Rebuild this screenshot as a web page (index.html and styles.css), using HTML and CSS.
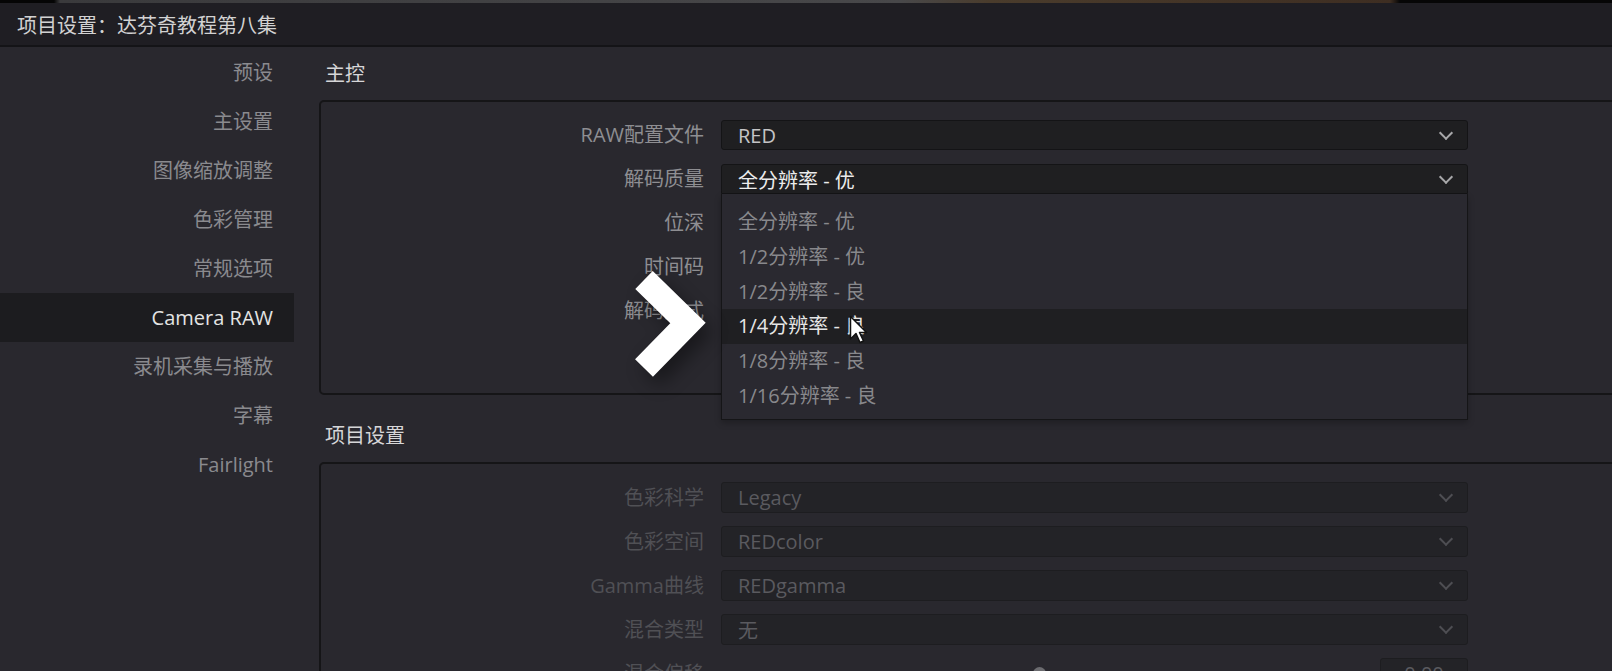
FILE: index.html
```html
<!DOCTYPE html>
<html lang="zh-CN">

<head>
    <meta charset="UTF-8">
    <title>项目设置</title>
    <link rel="stylesheet" href="styles.css">
</head>

<body>
    <div class="top-strip"></div>
    <header class="title-bar">项目设置：达芬奇教程第八集</header>

    <div class="window">
        <nav class="sidebar">
            <div class="nav-item">预设</div>
            <div class="nav-item">主设置</div>
            <div class="nav-item">图像缩放调整</div>
            <div class="nav-item">色彩管理</div>
            <div class="nav-item">常规选项</div>
            <div class="nav-item active">Camera RAW</div>
            <div class="nav-item">录机采集与播放</div>
            <div class="nav-item">字幕</div>
            <div class="nav-item">Fairlight</div>
        </nav>

        <main class="content">
            <h3 class="section-title">主控</h3>
            <div class="panel panel-master">
                <div class="form-grid">
                    <div class="field-label">RAW配置文件</div>
                    <div class="select"><span>RED</span><i class="chev"></i></div>

                    <div class="field-label">解码质量</div>
                    <div class="select-wrap">
                        <div class="select open"><span>全分辨率 - 优</span><i class="chev"></i></div>
                        <ul class="menu">
                            <li>全分辨率 - 优</li>
                            <li>1/2分辨率 - 优</li>
                            <li>1/2分辨率 - 良</li>
                            <li class="hover">1/4分辨率 - 良</li>
                            <li>1/8分辨率 - 良</li>
                            <li>1/16分辨率 - 良</li>
                        </ul>
                    </div>

                    <div class="field-label">位深</div>
                    <div class="select"><span>16</span><i class="chev"></i></div>

                    <div class="field-label">时间码</div>
                    <div class="select"><span>绝对时间码</span><i class="chev"></i></div>

                    <div class="field-label">解码方式</div>
                    <div class="select"><span>使用GPU</span><i class="chev"></i></div>
                </div>
            </div>

            <h3 class="section-title second">项目设置</h3>
            <div class="panel panel-dim">
                <div class="form-grid dim-grid">
                    <div class="field-label">色彩科学</div>
                    <div class="select"><span>Legacy</span><i class="chev"></i></div>

                    <div class="field-label">色彩空间</div>
                    <div class="select"><span>REDcolor</span><i class="chev"></i></div>

                    <div class="field-label">Gamma曲线</div>
                    <div class="select"><span>REDgamma</span><i class="chev"></i></div>

                    <div class="field-label">混合类型</div>
                    <div class="select"><span>无</span><i class="chev"></i></div>

                    <div class="field-label">混合偏移</div>
                    <div class="slider-row">
                        <div class="slider-track"><div class="slider-dot"></div></div>
                        <div class="value-box">0.00</div>
                    </div>
                </div>
            </div>
        </main>
    </div>

    <!-- video overlay: big next arrow + mouse pointer -->
    <svg class="next-arrow" width="110" height="130" viewBox="0 0 110 130">
        <polyline points="24,20 68,63 24,108" fill="none" stroke="#ffffff" stroke-width="25"
            stroke-linejoin="miter" stroke-linecap="butt" />
    </svg>
    <svg class="pointer" width="20" height="30" viewBox="0 0 20 30">
        <path d="M1.5 1.5 L1.5 24 L7 18.5 L11 27.5 L14.5 26 L10.5 17.5 L17.5 17.5 Z" fill="#ffffff"
            stroke="#111111" stroke-width="1.5" stroke-linejoin="round" />
    </svg>
</body>

</html>
```

FILE: styles.css
```css
html,
body {
    margin: 0;
    padding: 0;
    height: 100%;
    overflow: hidden;
}

body {
    background: #29282e;
    font-family: 'Open Sans', 'Noto Sans CJK SC', sans-serif;
    font-size: 20px;
    color: #8c8c90;
    position: relative;
}

.top-strip {
    height: 3px;
    background: linear-gradient(90deg, #050505 0, #050505 54px, #3a3a3c 60px, #48484a 900px, #4a3c2c 990px, #3e2e22 1390px, #060606 1400px);
}

.title-bar {
    height: 44px;
    line-height: 46px;
    padding-left: 17px;
    background: #1f1e23;
    color: #d2d2d2;
    border-bottom: 2px solid #141417;
    box-sizing: border-box;
}

.window {
    display: flex;
}

/* left navigation */
.sidebar {
    width: 294px;
    flex-shrink: 0;
    padding-top: 1px;
}

.nav-item {
    height: 49px;
    line-height: 49px;
    text-align: right;
    padding-right: 21px;
    color: #8a8a8e;
}

.nav-item.active {
    background: #1c1c1f;
    color: #e4e4e4;
}

/* right side */
.content {
    flex: 1;
    padding-left: 25px;
}

.section-title {
    margin: 0;
    height: 53px;
    line-height: 54px;
    padding-left: 6px;
    font-size: 20px;
    font-weight: normal;
    color: #d6d6d8;
}

.section-title.second {
    margin-top: 14px;
}

.panel {
    width: 1500px;
    border: 2px solid #151517;
    border-radius: 5px;
    background: #29282e;
}

.panel-master {
    height: 295px;
    box-sizing: border-box;
    padding-top: 18px;
}

.panel-dim {
    padding-top: 18px;
    height: 260px;
    box-sizing: border-box;
}

.form-grid {
    display: grid;
    grid-template-columns: 383px 747px;
    column-gap: 17px;
    row-gap: 14px;
}

.field-label {
    height: 30px;
    line-height: 30px;
    text-align: right;
    color: #8e8e92;
}

.select {
    height: 30px;
    box-sizing: border-box;
    border: 1px solid #141416;
    border-radius: 3px;
    background: #1f1f21;
    color: #c4c4c6;
    display: flex;
    align-items: center;
    justify-content: space-between;
    padding: 0 14px 0 16px;
}

.select.open {
    color: #ececec;
    border-radius: 3px 3px 0 0;
}

.chev {
    width: 8px;
    height: 8px;
    border-right: 2px solid #a8a8aa;
    border-bottom: 2px solid #a8a8aa;
    transform: rotate(45deg);
    margin-top: -5px;
    margin-right: 2px;
}

.select-wrap {
    position: relative;
}

.menu {
    position: absolute;
    top: 30px;
    left: 0;
    right: 0;
    z-index: 5;
    margin: 0;
    padding: 11px 0 5px 0;
    list-style: none;
    background: #2a2930;
    border: 1px solid #151517;
    border-top: none;
    box-shadow: 0 3px 6px rgba(0, 0, 0, 0.25);
}

.menu li {
    height: 34.8px;
    line-height: 34.8px;
    padding-left: 16px;
    color: #88888c;
}

.menu li.hover {
    background: #1f1f22;
    color: #e6e6e6;
}

/* dimmed (disabled) project settings */
.dim-grid {
    row-gap: 13px;
}

.dim-grid .field-label {
    height: 31px;
    line-height: 31px;
    color: #505055;
}

.dim-grid .select {
    height: 31px;
    background: #232327;
    border-color: #1d1d20;
    color: #5a5a5f;
}

.dim-grid .chev {
    border-color: #4e4e53;
}

.slider-row {
    display: flex;
    align-items: center;
    justify-content: space-between;
    height: 31px;
}

.slider-track {
    position: relative;
    width: 520px;
    height: 2px;
    background: #3a3a3e;
    margin-left: 40px;
}

.slider-dot {
    position: absolute;
    left: 272px;
    top: -6px;
    width: 13px;
    height: 13px;
    border-radius: 50%;
    background: #6c6c70;
}

.value-box {
    width: 88px;
    height: 31px;
    box-sizing: border-box;
    border: 1px solid #1d1d20;
    border-radius: 3px;
    background: #232327;
    color: #5a5a5f;
    text-align: center;
    line-height: 29px;
}

/* overlay graphics */
.next-arrow {
    position: absolute;
    left: 620px;
    top: 260px;
    z-index: 10;
    filter: drop-shadow(7px 9px 9px rgba(0, 0, 0, 0.4));
}

.pointer {
    position: absolute;
    left: 849px;
    top: 315px;
    z-index: 11;
}
```
